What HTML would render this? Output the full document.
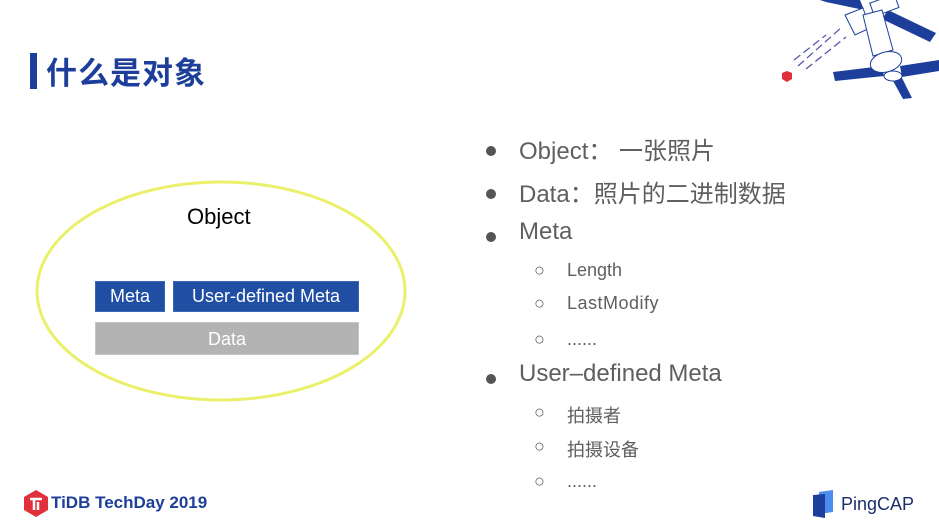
<!DOCTYPE html>
<html><head><meta charset="utf-8"><style>
body{margin:0;width:939px;height:525px;background:#fff;position:relative;overflow:hidden;font-family:"Liberation Sans","Noto Sans CJK SC",sans-serif}
.a{position:absolute;white-space:nowrap}
.b{color:#5f5f5f;font-size:24px}
.s{color:#5f5f5f;font-size:18px}
.d{position:absolute;width:10px;height:10px;border-radius:50%;background:#555}
.box{position:absolute;background:#1f4ea3;border:1px solid #3a66b8;color:#fff;font-size:18px;text-align:center;box-sizing:border-box;line-height:28px}
</style></head><body>
<div class="a" style="left:30px;top:53px;width:7px;height:36px;background:#1d3f9b"></div>
<div class="a" style="left:46px;top:48px;font-size:31px;font-weight:bold;color:#1d3f9b;font-family:'Noto Sans CJK SC',sans-serif;letter-spacing:1px">什么是对象</div>

<svg class="a" style="left:760px;top:0" width="179" height="100" viewBox="0 0 179 100">
<g fill="#1d3f9b"><polygon points="60,0 100,0 104,10 66,2"/><polygon points="128,10 176,33 170,42 122,19"/><polygon points="73,72 122,66 124,76 75,81"/><polygon points="140,66 179,60 179,71 142,77"/><polygon points="132,79 141,76 152,98 143,99"/></g>
<g fill="#fff" stroke="#1d3f9b" stroke-width="1"><polygon points="85,15 103,8 110,28 95,35"/><rect x="112" y="0" width="26" height="14" transform="rotate(-20 120 8)"/><polygon points="103,15 122,10 133,50 113,56"/><ellipse cx="126" cy="62" rx="16" ry="10" transform="rotate(-15 126 62)"/><ellipse cx="133" cy="76" rx="9" ry="5"/></g>
<g stroke="#4e4ea8" stroke-width="1.2" stroke-dasharray="8 4"><line x1="38" y1="66" x2="82" y2="27"/><line x1="46" y1="69" x2="86" y2="37"/><line x1="34" y1="60" x2="66" y2="35"/></g>
<polygon points="27,71 32,73 32,79 27,82 22,79 22,73" fill="#e0303c"/>
</svg>

<svg class="a" style="left:0;top:0" width="420" height="420">
<ellipse cx="221" cy="291" rx="184" ry="109" fill="none" stroke="#eaf06a" stroke-width="3"/>
</svg>
<div class="a" style="left:187px;top:204px;font-size:22px;color:#000">Object</div>
<div class="box" style="left:95px;top:281px;width:70px;height:31px">Meta</div>
<div class="box" style="left:173px;top:281px;width:186px;height:31px">User-defined Meta</div>
<div class="box" style="left:95px;top:322px;width:264px;height:33px;background:#b3b3b3;border-color:#c4c4c4;line-height:33px">Data</div>

<div class="d" style="left:486px;top:146px"></div><div class="a b" style="left:519px;top:131px">Object： 一张照片</div>
<div class="d" style="left:486px;top:189px"></div><div class="a b" style="left:519px;top:174px">Data：照片的二进制数据</div>
<div class="d" style="left:486px;top:232px"></div><div class="a b" style="left:519px;top:218px">Meta</div>
<div class="d" style="left:486px;top:374px"></div><div class="a b" style="left:519px;top:360px">User–defined Meta</div>
<div class="a s" style="left:534px;top:260px">○</div><div class="a s" style="left:567px;top:260px">Length</div>
<div class="a s" style="left:534px;top:293px">○</div><div class="a s" style="left:567px;top:293px;letter-spacing:0.5px">LastModify</div>
<div class="a s" style="left:534px;top:329px">○</div><div class="a s" style="left:567px;top:329px">......</div>
<div class="a s" style="left:534px;top:402px">○</div><div class="a s" style="left:567px;top:402px">拍摄者</div>
<div class="a s" style="left:534px;top:436px">○</div><div class="a s" style="left:567px;top:436px">拍摄设备</div>
<div class="a s" style="left:534px;top:471px">○</div><div class="a s" style="left:567px;top:471px">......</div>

<svg class="a" style="left:24px;top:490px" width="24" height="27"><polygon points="12,0 24,7 24,20 12,27 0,20 0,7" fill="#e0303c"/><path d="M6,9h12M10,9v11M14,12v8" stroke="#fff" stroke-width="2.5" fill="none"/></svg>
<div class="a" style="left:51px;top:493px;font-size:17px;font-weight:bold;color:#1d3f9b">TiDB TechDay 2019</div>

<svg class="a" style="left:813px;top:490px" width="24" height="28"><polygon points="6,2 20,0 20,22 6,24" fill="#4a8cf0"/><polygon points="0,5 12,4 12,28 0,26" fill="#1d3f9b"/></svg>
<div class="a" style="left:841px;top:494px;font-size:18px;color:#1d2f6b">PingCAP</div>
</body></html>
